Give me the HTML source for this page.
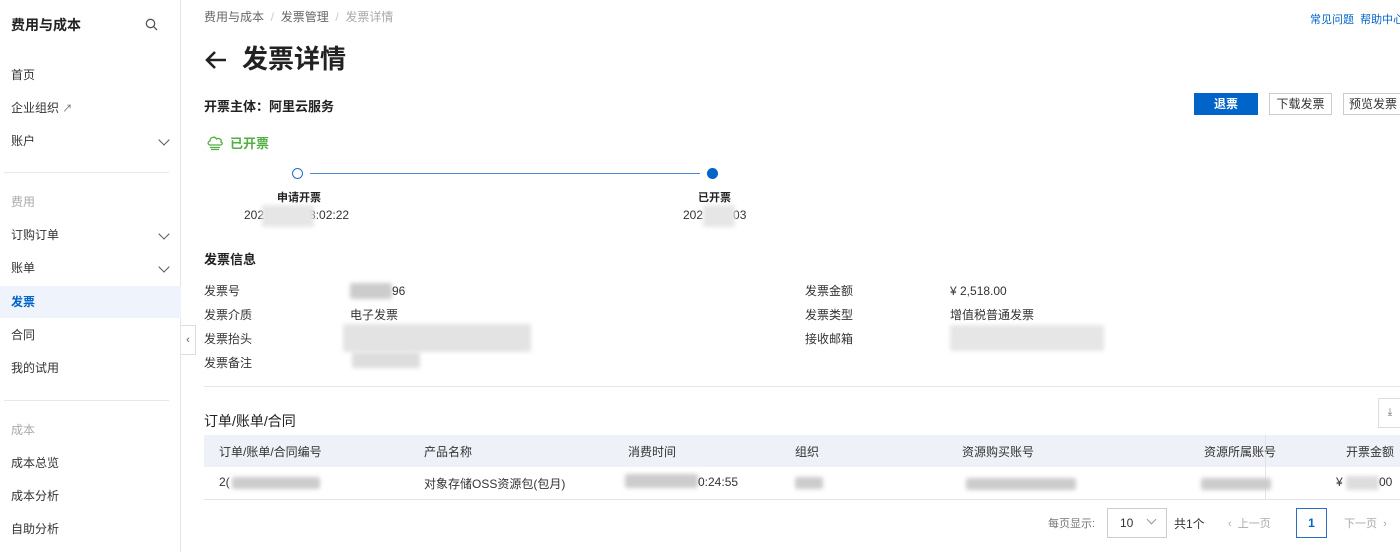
<!DOCTYPE html>
<html><head><meta charset="utf-8"><style>
*{box-sizing:border-box;margin:0;padding:0}
body{width:1400px;height:552px;overflow:hidden;background:#fff;font-family:"Liberation Sans","Noto Sans CJK SC",sans-serif;color:#333;font-size:12px;position:relative}
.a{position:absolute;white-space:nowrap}
.side{position:absolute;left:0;top:0;width:181px;height:552px;border-right:1px solid #e5e5e5;background:#fff}
.mi{position:absolute;left:11px;font-size:12px;color:#333;line-height:16px}
.chev{position:absolute;left:160px;width:8px;height:8px;border-right:1.3px solid #555;border-bottom:1.3px solid #555;transform:rotate(45deg)}
.hr{position:absolute;left:0;width:165px;height:1px;background:#e8e8e8}
.blur{position:absolute;background:#ccc;filter:blur(2px);border-radius:2px}
.btn{position:absolute;top:93px;height:22px;border:1px solid #ccc;font-size:12px;text-align:center;line-height:20px;color:#333;background:#fff}
.lbl{position:absolute;font-size:12px;color:#333;line-height:14px}
.th{position:absolute;top:443px;font-size:12px;color:#333}
</style></head><body>
<div class="side">
<div class="a" style="left:11px;top:15px;font-size:14px;font-weight:bold;color:#222">费用与成本</div>
<svg class="a" style="left:145px;top:18px" width="13" height="13" viewBox="0 0 13 13"><circle cx="5.5" cy="5.5" r="4.2" fill="none" stroke="#555" stroke-width="1.3"/><path d="M8.6 8.6L12 12" stroke="#555" stroke-width="1.3"/></svg>
<div class="mi" style="top:67px">首页</div>
<div class="mi" style="top:100px">企业组织 <span style="font-size:10px;color:#666">↗</span></div>
<div class="mi" style="top:133px">账户</div><div class="chev" style="top:136px"></div>
<div class="hr" style="top:172px;left:4px"></div>
<div class="mi" style="top:194px;color:#aaa">费用</div>
<div class="mi" style="top:227px">订购订单</div><div class="chev" style="top:230px"></div>
<div class="mi" style="top:260px">账单</div><div class="chev" style="top:263px"></div>
<div class="a" style="left:0;top:286px;width:181px;height:32px;background:#eff3fb"></div>
<div class="mi" style="top:294px;color:#0064c8;font-weight:bold">发票</div>
<div class="mi" style="top:327px">合同</div>
<div class="mi" style="top:360px">我的试用</div>
<div class="hr" style="top:400px;left:4px"></div>
<div class="mi" style="top:422px;color:#aaa">成本</div>
<div class="mi" style="top:455px">成本总览</div>
<div class="mi" style="top:488px">成本分析</div>
<div class="mi" style="top:521px">自助分析</div>
</div>
<div class="a" style="left:181px;top:325px;width:15px;height:30px;border:1px solid #ddd;border-left:none;background:#fff;font-size:11px;line-height:28px;text-align:center;color:#555">‹</div>

<div class="a" style="left:204px;top:8px;font-size:12px;color:#666">费用与成本 <span style="color:#ccc">&nbsp;/&nbsp;</span> 发票管理 <span style="color:#ccc">&nbsp;/&nbsp;</span> <span style="color:#aaa">发票详情</span></div>
<div class="a" style="left:1310px;top:11px;font-size:11px;color:#0064c8">常见问题 &nbsp;帮助中心</div>
<svg class="a" style="left:204px;top:50px" width="24" height="20" viewBox="0 0 24 20"><path d="M22 10H3M11 2L3 10L11 18" fill="none" stroke="#222" stroke-width="2.6"/></svg>
<div class="a" style="left:242px;top:43px;font-size:26px;font-weight:bold;color:#222;line-height:32px">发票详情</div>
<div class="a" style="left:204px;top:96px;font-size:13px;font-weight:bold;color:#222">开票主体：阿里云服务</div>
<div class="btn" style="left:1194px;width:64px;background:#0064c8;border-color:#0064c8;color:#fff;font-weight:bold">退票</div>
<div class="btn" style="left:1269px;width:63px">下载发票</div>
<div class="btn" style="left:1343px;width:60px">预览发票</div>

<svg class="a" style="left:206px;top:133px" width="18" height="18" viewBox="0 0 18 18"><path d="M4 12C1.5 12 1.5 8 4 8C4 4 9 3 10.5 6C13 4.5 16 6.5 15 9C17 10 16.5 12 14 12Z" fill="none" stroke="#52b043" stroke-width="1.3"/><path d="M4 14.5H14M5 16.5H13" stroke="#52b043" stroke-width="1.2"/></svg>
<div class="a" style="left:230px;top:133px;font-size:13px;color:#52b043;font-weight:bold">已开票</div>

<div class="a" style="left:292px;top:168px;width:11px;height:11px;border:1.3px solid #2b6cc4;border-radius:50%;background:#fff"></div>
<div class="a" style="left:310px;top:173px;width:390px;height:1px;background:#4f86d0"></div>
<div class="a" style="left:707px;top:168px;width:11px;height:11px;border-radius:50%;background:#0064c8"></div>
<div class="a" style="left:277px;top:189px;font-size:11px;font-weight:bold;color:#222">申请开票</div>
<div class="a" style="left:244px;top:208px;font-size:12px;color:#333">202<span style="display:inline-block;width:45px"></span>8:02:22</div>
<div class="blur" style="left:262px;top:205px;width:52px;height:22px;background:#e6e6e6"></div>
<div class="a" style="left:698px;top:189px;font-size:11px;font-weight:bold;color:#222">已开票</div>
<div class="a" style="left:683px;top:208px;font-size:12px;color:#333">202<span style="display:inline-block;width:30px"></span>03</div>
<div class="blur" style="left:703px;top:205px;width:32px;height:22px;background:#e6e6e6"></div>

<div class="a" style="left:204px;top:249px;font-size:13px;font-weight:bold;color:#222">发票信息</div>
<div class="lbl" style="left:204px;top:284px">发票号</div>
<div class="lbl" style="left:204px;top:308px">发票介质</div>
<div class="lbl" style="left:204px;top:332px">发票抬头</div>
<div class="lbl" style="left:204px;top:356px">发票备注</div>
<div class="blur" style="left:350px;top:283px;width:42px;height:16px"></div><div class="lbl" style="left:392px;top:284px">96</div>
<div class="lbl" style="left:350px;top:308px">电子发票</div>
<div class="blur" style="left:343px;top:324px;width:188px;height:28px;background:#e3e3e3"></div>
<div class="blur" style="left:352px;top:352px;width:68px;height:16px;background:#ddd"></div>
<div class="lbl" style="left:805px;top:284px">发票金额</div>
<div class="lbl" style="left:805px;top:308px">发票类型</div>
<div class="lbl" style="left:805px;top:332px">接收邮箱</div>
<div class="lbl" style="left:950px;top:284px">¥ 2,518.00</div>
<div class="lbl" style="left:950px;top:308px">增值税普通发票</div>
<div class="blur" style="left:950px;top:325px;width:154px;height:26px;background:#e6e6e6"></div>
<div class="a" style="left:204px;top:386px;width:1196px;height:1px;background:#e5e5e5"></div>

<div class="a" style="left:204px;top:411px;font-size:14px;color:#222">订单/账单/合同</div>
<div class="a" style="left:1378px;top:398px;width:24px;height:30px;border:1px solid #ddd;font-size:10px;color:#666;text-align:center;line-height:28px">⤓</div>
<div class="a" style="left:204px;top:435px;width:1196px;height:32px;background:#eef1f7"></div>
<div class="a" style="left:1265px;top:435px;width:1px;height:64px;background:#e3e3e3"></div>
<div class="th" style="left:219px">订单/账单/合同编号</div>
<div class="th" style="left:424px">产品名称</div>
<div class="th" style="left:628px">消费时间</div>
<div class="th" style="left:795px">组织</div>
<div class="th" style="left:962px">资源购买账号</div>
<div class="th" style="left:1204px">资源所属账号</div>
<div class="th" style="left:1346px">开票金额</div>
<div class="th" style="left:219px;top:475px">2(</div>
<div class="blur" style="left:232px;top:477px;width:88px;height:12px"></div>
<div class="th" style="left:424px;top:475px">对象存储OSS资源包(包月)</div>
<div class="blur" style="left:625px;top:474px;width:73px;height:14px"></div>
<div class="th" style="left:698px;top:475px">0:24:55</div>
<div class="blur" style="left:795px;top:477px;width:28px;height:12px"></div>
<div class="blur" style="left:966px;top:478px;width:110px;height:12px"></div>
<div class="blur" style="left:1201px;top:478px;width:70px;height:12px"></div>
<div class="th" style="left:1336px;top:475px">¥</div>
<div class="blur" style="left:1346px;top:476px;width:33px;height:14px;background:#ddd"></div>
<div class="th" style="left:1379px;top:475px">00</div>
<div class="a" style="left:204px;top:499px;width:1196px;height:1px;background:#e5e5e5"></div>

<div class="a" style="left:1048px;top:515px;font-size:11px;color:#777">每页显示:</div>
<div class="a" style="left:1107px;top:508px;width:60px;height:30px;border:1px solid #ccc;font-size:12px;line-height:28px;padding-left:12px;color:#333">10</div>
<div class="a" style="left:1148px;top:516px;width:7px;height:7px;border-right:1px solid #999;border-bottom:1px solid #999;transform:rotate(45deg)"></div>
<div class="a" style="left:1174px;top:515px;font-size:12px;color:#333">共1个</div>
<div class="a" style="left:1228px;top:515px;font-size:11px;color:#aaa">‹ &nbsp;上一页</div>
<div class="a" style="left:1296px;top:508px;width:31px;height:30px;border:1px solid #2b6cc4;font-size:12px;line-height:28px;text-align:center;color:#0064c8;font-weight:bold">1</div>
<div class="a" style="left:1344px;top:515px;font-size:11px;color:#aaa">下一页 &nbsp;›</div>
</body></html>
